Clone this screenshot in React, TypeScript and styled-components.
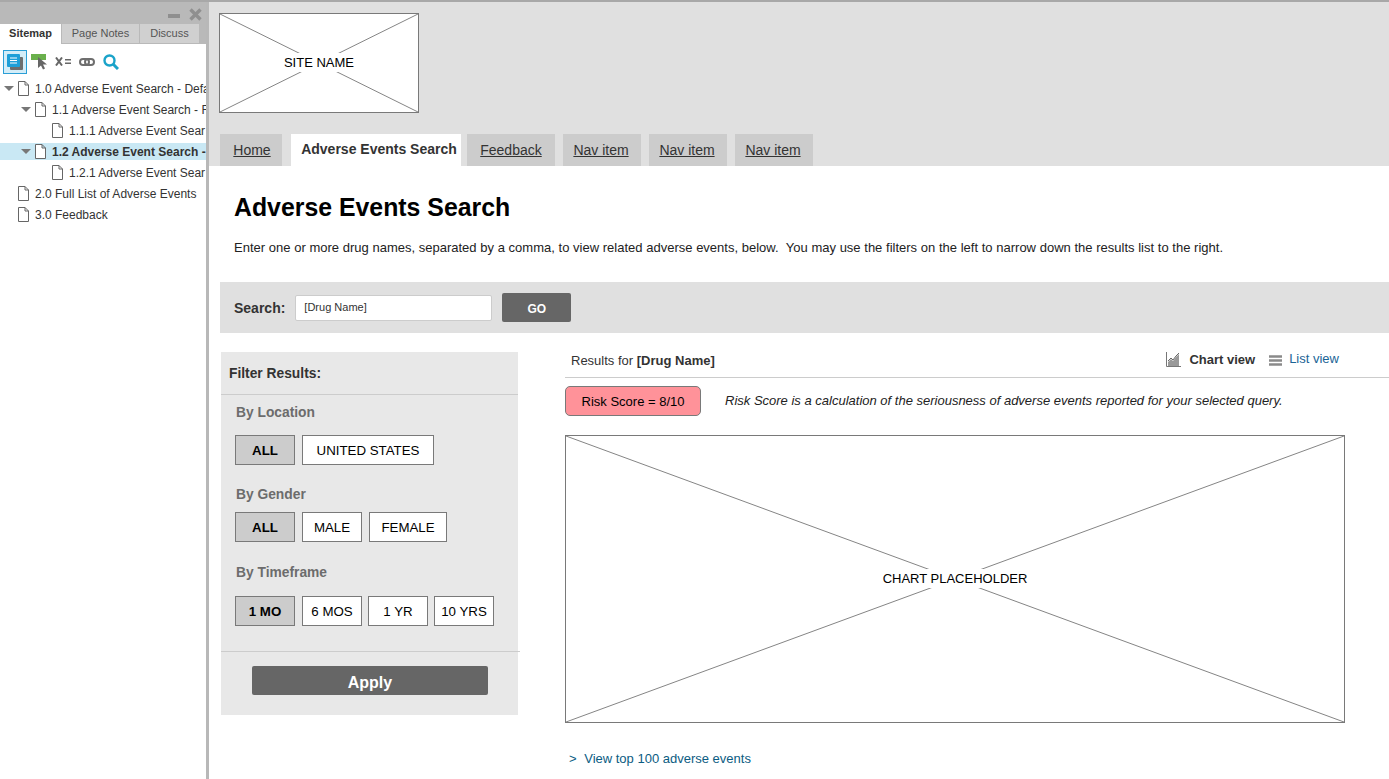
import styled, { createGlobalStyle } from 'styled-components';

const GlobalStyle = createGlobalStyle`
  html, body {
    margin: 0;
    padding: 0;
    background: #fff;
    overflow: hidden;
  }
  body {
    font-family: "Liberation Sans", Arial, sans-serif;
    color: #222;
  }
  * { box-sizing: border-box; }
`;

const Page = styled.div`
  width: 1389px;
  height: 779px;
  display: flex;
  overflow: hidden;
  border-top: 2px solid #a8a8a8;
`;

/* left sitemap pane */
const Pane = styled.aside`
  width: 209px;
  flex: none;
  border-right: 3px solid #b8b8b8;
  display: flex;
  flex-direction: column;
`;
const PaneTitle = styled.div`
  height: 22px;
  background: #b9b9b9;
  display: flex;
  justify-content: flex-end;
  align-items: center;
  gap: 9px;
  padding: 2px 4px 0 0;
`;
const PaneTabs = styled.div`
  height: 20px;
  display: flex;
  background: #b9b9b9;
`;
const PaneTab = styled.div<{ $active?: boolean; $w: number }>`
  width: ${(p) => p.$w}px;
  background: ${(p) => (p.$active ? '#fff' : '#d0d0d0')};
  border-right: 1px solid #b9b9b9;
  border-bottom: ${(p) => (p.$active ? 'none' : '1px solid #b9b9b9')};
  color: ${(p) => (p.$active ? '#333' : '#555')};
  font-weight: ${(p) => (p.$active ? 'bold' : 'normal')};
  font-size: 11px;
  line-height: 19px;
  text-align: center;
`;
const PaneTools = styled.div`
  height: 34px;
  display: flex;
  align-items: center;
  gap: 8px;
  padding: 1px 0 0 3px;
`;
const ToolBox = styled.div`
  width: 24px;
  height: 24px;
  margin-right: -4px;
  border: 1px solid #2b9fd6;
  background: #d4edf8;
  display: flex;
  align-items: center;
  justify-content: center;
`;
const Tree = styled.div`
  display: flex;
  flex-direction: column;
`;
const TreeRow = styled.div<{ $level: number; $active?: boolean }>`
  height: ${(p) => (p.$active ? '17px' : '21px')};
  margin: ${(p) => (p.$active ? '2px 0' : '0')};
  display: flex;
  align-items: center;
  padding-left: ${(p) => 4 + p.$level * 17}px;
  background: ${(p) => (p.$active ? '#c9e8f4' : 'transparent')};
  font-size: 12px;
  font-weight: ${(p) => (p.$active ? 'bold' : 'normal')};
  color: #333;
  white-space: nowrap;
  overflow: hidden;
`;
const Caret = styled.span<{ $show: boolean }>`
  width: 0;
  height: 0;
  flex: none;
  border-left: 5px solid transparent;
  border-right: 5px solid transparent;
  border-top: 5px solid ${(p) => (p.$show ? '#777' : 'transparent')};
  margin-right: 2px;
`;
const PageIcon = styled.svg`
  flex: none;
`;
const TreeLabel = styled.span`
  margin-left: 4px;
`;

/* main wireframe */
const Main = styled.main`
  flex: 1;
  min-width: 0;
  display: flex;
  flex-direction: column;
`;
const Header = styled.header`
  height: 164px;
  background: #e0e0e0;
  padding: 11px 0 0 10px;
  display: flex;
  flex-direction: column;
  justify-content: space-between;
`;
const Placeholder = styled.div<{ $w: number; $h: number }>`
  position: relative;
  width: ${(p) => p.$w}px;
  height: ${(p) => p.$h}px;
  flex: none;
  background: #fff;
  border: 1px solid #797979;
  display: flex;
  align-items: center;
  justify-content: center;
  padding-bottom: 2px;
  font-size: 13px;
  color: #000;
`;
const Cross = styled.svg`
  position: absolute;
  inset: 0;
  width: 100%;
  height: 100%;
`;
const PlaceholderText = styled.span`
  position: relative;
  background: #fff;
  padding: 2px 1px;
`;
const Nav = styled.nav`
  display: flex;
  height: 32px;
  padding-left: 1px;
`;
const NavItem = styled.a<{ $active?: boolean; $w: number; $after: number; $shift: number }>`
  width: ${(p) => p.$w}px;
  margin-right: ${(p) => p.$after}px;
  text-indent: ${(p) => p.$shift * 2}px;
  background: ${(p) => (p.$active ? '#fff' : '#cccccc')};
  color: #333;
  font-size: 14px;
  font-weight: ${(p) => (p.$active ? 'bold' : 'normal')};
  text-decoration: ${(p) => (p.$active ? 'none' : 'underline')};
  text-align: center;
  line-height: ${(p) => (p.$active ? '31px' : '33px')};
`;
const Intro = styled.section`
  height: 116px;
  padding: 26px 0 0 25px;
`;
const Title = styled.h1`
  margin: 0;
  font-size: 24.85px;
  line-height: 31px;
  font-weight: bold;
  color: #000;
`;
const Lead = styled.p`
  margin: 17px 0 0;
  font-size: 13px;
  line-height: 16px;
  word-spacing: 0.08px;
  color: #222;
`;
const SearchBar = styled.div`
  height: 51px;
  margin-left: 11px;
  background: #e0e0e0;
  display: flex;
  align-items: center;
  padding-left: 14px;
  font-size: 14px;
  font-weight: bold;
  color: #333;
`;
const SearchInput = styled.div`
  width: 197px;
  height: 26px;
  margin: 0 10px 0 10px;
  background: #fff;
  border: 1px solid #ccc;
  border-radius: 2px;
  padding-left: 8px;
  font-size: 11px;
  font-weight: normal;
  line-height: 23px;
  color: #333;
`;
const GoButton = styled.div`
  width: 69px;
  height: 29px;
  background: #666;
  border-radius: 2px;
  color: #fff;
  font-size: 12px;
  font-weight: bold;
  text-align: center;
  line-height: 33px;
`;
const Columns = styled.div`
  flex: 1;
  display: flex;
  padding: 19px 0 0 12px;
`;
const Filter = styled.div`
  width: 297px;
  height: 363px;
  flex: none;
  background: #e8e8e8;
  display: flex;
  flex-direction: column;
`;
const FilterHead = styled.div`
  height: 43px;
  padding-left: 8px;
  border-bottom: 1px solid #ccc;
  font-size: 13.8px;
  font-weight: bold;
  line-height: 44px;
  color: #333;
`;
const GroupTitle = styled.div<{ $top: number }>`
  margin-top: ${(p) => p.$top}px;
  padding-left: 15px;
  height: 16px;
  font-size: 13.8px;
  font-weight: bold;
  line-height: 18px;
  color: #6c6c6c;
`;
const Options = styled.div<{ $top: number }>`
  margin-top: ${(p) => p.$top}px;
  padding-left: 14px;
  display: flex;
`;
const Option = styled.div<{ $selected?: boolean; $w: number; $after?: number }>`
  width: ${(p) => p.$w}px;
  height: 30px;
  margin-right: ${(p) => p.$after ?? 0}px;
  border: 1px solid #797979;
  background: ${(p) => (p.$selected ? '#cccccc' : '#fff')};
  font-size: 13.3px;
  font-weight: ${(p) => (p.$selected ? 'bold' : 'normal')};
  line-height: 30px;
  text-align: center;
  color: #000;
`;
const FilterFoot = styled.div`
  margin-top: 25px;
  width: 299px;
  border-top: 1px solid #ccc;
  padding: 14px 0 0 31px;
`;
const ApplyButton = styled.div`
  width: 236px;
  height: 29px;
  background: #666;
  border-radius: 2px;
  color: #fff;
  font-size: 16px;
  font-weight: bold;
  text-align: center;
  line-height: 34px;
`;
const Results = styled.div`
  flex: 1;
  min-width: 0;
  padding-left: 47px;
  display: flex;
  flex-direction: column;
`;
const ResultsHead = styled.div`
  height: 26px;
  border-bottom: 1px solid #ccc;
  display: flex;
  align-items: center;
  padding: 0 50px 9px 6px;
  font-size: 13px;
  color: #333;
`;
const ResultsName = styled.span`
  flex: 1;
`;
const ViewLink = styled.span<{ $active?: boolean }>`
  display: flex;
  align-items: center;
  gap: ${(p) => (p.$active ? 8 : 7)}px;
  margin-left: 14px;
  font-weight: ${(p) => (p.$active ? 'bold' : 'normal')};
  color: ${(p) => (p.$active ? '#333' : '#1a6496')};
  position: relative;
  top: ${(p) => (p.$active ? '-1px' : '-2px')};
`;
const ListIcon = styled.svg`
  margin-top: 4px;
`;
const RiskRow = styled.div`
  display: flex;
  align-items: center;
  margin-top: 8px;
  font-size: 13px;
`;
const RiskBadge = styled.div`
  width: 136px;
  height: 30px;
  background: #ff9299;
  border: 1px solid #797979;
  border-radius: 5px;
  text-align: center;
  line-height: 29px;
  color: #000;
`;
const RiskNote = styled.em`
  margin: 0 0 2px 24px;
  font-size: 13px;
  color: #222;
`;
const ChartWrap = styled.div`
  margin-top: 19px;
`;
const MoreLink = styled.div`
  margin-top: 28px;
  padding-left: 4px;
  font-size: 13px;
  color: #0b5c82;
`;
const MoreArrow = styled.span`
  margin-right: 4px;
`;

const treeRows = [
  { level: 0, caret: true, label: '1.0 Adverse Event Search - Defa' },
  { level: 1, caret: true, label: '1.1 Adverse Event Search - F' },
  { level: 2, caret: false, label: '1.1.1 Adverse Event Sear' },
  { level: 1, caret: true, label: '1.2 Adverse Event Search -', active: true },
  { level: 2, caret: false, label: '1.2.1 Adverse Event Sear' },
  { level: 0, caret: false, label: '2.0 Full List of Adverse Events' },
  { level: 0, caret: false, label: '3.0 Feedback' },
];

const CrossLines = ({ w, h }: { w: number; h: number }) => (
  <Cross viewBox={`0 0 ${w} ${h}`} preserveAspectRatio="none">
    <line x1="0" y1="0" x2={w} y2={h} stroke="#858585" />
    <line x1={w} y1="0" x2="0" y2={h} stroke="#858585" />
  </Cross>
);

export default function App() {
  return (
    <>
      <GlobalStyle />
      <Page>
        <Pane>
          <PaneTitle>
            <svg width="12" height="12" viewBox="0 0 12 12"><rect x="0" y="6" width="12" height="4" fill="#8f8f8f" /></svg>
            <svg width="13" height="13" viewBox="0 0 13 13"><path d="M1.5 1.5l10 10M11.5 1.5l-10 10" stroke="#8f8f8f" strokeWidth="3.4" /></svg>
          </PaneTitle>
          <PaneTabs>
            <PaneTab $active $w={62}>Sitemap</PaneTab>
            <PaneTab $w={78}>Page Notes</PaneTab>
            <PaneTab $w={60}>Discuss</PaneTab>
          </PaneTabs>
          <PaneTools>
            <ToolBox>
              <svg width="16" height="16" viewBox="0 0 16 16">
                <rect x="3" y="3" width="13" height="13" rx="1" fill="#6e6e6e" />
                <rect x="0" y="0" width="13" height="13" rx="1" fill="#1e9fd8" />
                <path d="M3 4h7M3 6.5h7M3 9h7" stroke="#fff" strokeWidth="1.2" />
              </svg>
            </ToolBox>
            <svg width="16" height="16" viewBox="0 0 16 16">
              <rect x="0" y="0" width="15" height="6" fill="#6ab04c" />
              <path d="M7 3v11l3-2.600 2 4 2-1-2-4h4z" fill="#666" />
            </svg>
            <svg width="16" height="9" viewBox="0 0 16 9">
              <path d="M1 0.500l6 8M7 0.500l-6 8" stroke="#666" strokeWidth="2" />
              <path d="M10 2.800h6M10 6.200h6" stroke="#666" strokeWidth="1.500" />
            </svg>
            <svg width="16" height="8" viewBox="0 0 16 8">
              <rect x="1" y="1" width="9" height="6" rx="3" fill="none" stroke="#6e6e6e" strokeWidth="2" />
              <rect x="6" y="1" width="9" height="6" rx="3" fill="none" stroke="#6e6e6e" strokeWidth="2" />
            </svg>
            <svg width="16" height="16" viewBox="0 0 16 16">
              <circle cx="6.500" cy="6.500" r="5" fill="none" stroke="#1aa3c9" strokeWidth="2.400" />
              <path d="M10 10l5 5" stroke="#1aa3c9" strokeWidth="3" />
            </svg>
          </PaneTools>
          <Tree>
            {treeRows.map((r) => (
              <TreeRow key={r.label} $level={r.level} $active={r.active}>
                <Caret $show={r.caret} />
                <PageIcon width="15" height="17" viewBox="0 0 15 17">
                  <path d="M2.500 1.500h6.500l3.500 3.500v10.500h-10z M9 1.500v3.500h3.500" fill="#fff" stroke="#666" />
                </PageIcon>
                <TreeLabel>{r.label}</TreeLabel>
              </TreeRow>
            ))}
          </Tree>
        </Pane>
        <Main>
          <Header>
            <Placeholder $w={200} $h={100}>
              <CrossLines w={198} h={98} />
              <PlaceholderText>SITE NAME</PlaceholderText>
            </Placeholder>
            <Nav>
              <NavItem $w={62} $after={9} $shift={1}>Home</NavItem>
              <NavItem $active $w={170} $after={6} $shift={3}>Adverse Events Search</NavItem>
              <NavItem $w={88} $after={8} $shift={0}>Feedback</NavItem>
              <NavItem $w={78} $after={8} $shift={-1}>Nav item</NavItem>
              <NavItem $w={78} $after={8} $shift={-1}>Nav item</NavItem>
              <NavItem $w={78} $after={0} $shift={-1}>Nav item</NavItem>
            </Nav>
          </Header>
          <Intro>
            <Title>Adverse Events Search</Title>
            <Lead>Enter one or more drug names, separated by a comma, to view related adverse events, below.&nbsp; You may use the filters on the left to narrow down the results list to the right.</Lead>
          </Intro>
          <SearchBar>
            Search:
            <SearchInput>[Drug Name]</SearchInput>
            <GoButton>GO</GoButton>
          </SearchBar>
          <Columns>
            <Filter>
              <FilterHead>Filter Results:</FilterHead>
              <GroupTitle $top={9}>By Location</GroupTitle>
              <Options $top={15}>
                <Option $selected $w={60} $after={7}>ALL</Option>
                <Option $w={132}>UNITED STATES</Option>
              </Options>
              <GroupTitle $top={21}>By Gender</GroupTitle>
              <Options $top={10}>
                <Option $selected $w={60} $after={7}>ALL</Option>
                <Option $w={60} $after={7}>MALE</Option>
                <Option $w={78}>FEMALE</Option>
              </Options>
              <GroupTitle $top={22}>By Timeframe</GroupTitle>
              <Options $top={16}>
                <Option $selected $w={60} $after={7}>1 MO</Option>
                <Option $w={60} $after={6}>6 MOS</Option>
                <Option $w={60} $after={6}>1 YR</Option>
                <Option $w={60}>10 YRS</Option>
              </Options>
              <FilterFoot>
                <ApplyButton>Apply</ApplyButton>
              </FilterFoot>
            </Filter>
            <Results>
              <ResultsHead>
                <ResultsName>Results for <b>[Drug Name]</b></ResultsName>
                <ViewLink $active>
                  <svg width="15" height="15" viewBox="0 0 15 15">
                    <path d="M0.500 0v14.500H15" fill="none" stroke="#777" />
                    <path d="M2 14l0-4 3-3 2 2 3-4 3-3v12z" fill="#999" />
                    <path d="M2 9l3-3 2 2 3-4 3-3" fill="none" stroke="#666" />
                  </svg>
                  Chart view
                </ViewLink>
                <ViewLink>
                  <ListIcon width="13" height="11" viewBox="0 0 13 11">
                    <path d="M0 1.500h13M0 5.500h13M0 9.500h13" stroke="#8a8a8a" strokeWidth="2.400" />
                  </ListIcon>
                  List view
                </ViewLink>
              </ResultsHead>
              <RiskRow>
                <RiskBadge>Risk Score = 8/10</RiskBadge>
                <RiskNote>Risk Score is a calculation of the seriousness of adverse events reported for your selected query.</RiskNote>
              </RiskRow>
              <ChartWrap>
                <Placeholder $w={780} $h={288}>
                  <CrossLines w={778} h={286} />
                  <PlaceholderText>CHART PLACEHOLDER</PlaceholderText>
                </Placeholder>
              </ChartWrap>
              <MoreLink><MoreArrow>&gt;</MoreArrow> View top 100 adverse events</MoreLink>
            </Results>
          </Columns>
        </Main>
      </Page>
    </>
  );
}
